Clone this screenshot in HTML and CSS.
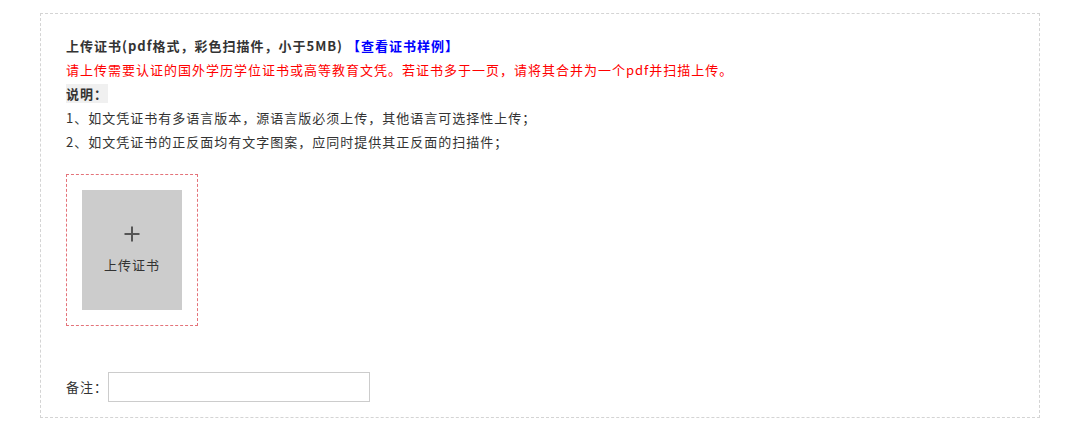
FILE: index.html
```html
<!DOCTYPE html>
<html lang="zh-CN">
<head>
<meta charset="utf-8">
<title>上传证书</title>
<link rel="stylesheet" href="styles.css">
</head>
<body>
<div class="panel">
  <div class="intro">
    <p class="title">上传证书(pdf格式，彩色扫描件，小于5MB) <a class="sample" href="#">【查看证书样例】</a></p>
    <p class="warn">请上传需要认证的国外学历学位证书或高等教育文凭。若证书多于一页，请将其合并为一个pdf并扫描上传。</p>
    <p><span class="label">说明：</span></p>
    <p>1、如文凭证书有多语言版本，源语言版必须上传，其他语言可选择性上传；</p>
    <p>2、如文凭证书的正反面均有文字图案，应同时提供其正反面的扫描件；</p>
  </div>
  <div class="upload">
    <div class="upload-btn">
      <svg class="plus" width="16" height="16" viewBox="0 0 16 16"><path d="M8 0.5v15M0.5 8h15" stroke="#555" stroke-width="2" fill="none"/></svg>
      <span class="upload-text">上传证书</span>
    </div>
  </div>
  <div class="remark">
    <span class="remark-label">备注：</span>
    <input class="remark-input" type="text">
  </div>
</div>
</body>
</html>
```
FILE: styles.css
```css
html, body {
  margin: 0;
  padding: 0;
  background: #fff;
}
body {
  padding: 13px 0 0 40px;
  font-family: "Microsoft YaHei", "Noto Sans CJK SC", "Noto Sans", sans-serif;
  font-size: 13px;
  letter-spacing: 1px;
  color: #333;
}
.panel {
  border: 1px dashed #d4d4d4;
  padding: 20px 25px 15px;
  box-sizing: border-box;
  width: 1000px;
}
.intro p {
  margin: 0;
  line-height: 24px;
}
.title {
  font-weight: bold;
}
.sample {
  color: #0000ff;
  text-decoration: none;
  font-weight: bold;
}
.warn {
  color: #ff0000;
}
.label {
  font-weight: bold;
  background: #f0f0f0;
}
.upload {
  margin-top: 20px;
  width: 132px;
  box-sizing: border-box;
  border: 1px dashed #e4737a;
  padding: 15px;
}
.upload-btn {
  width: 100px;
  height: 120px;
  background: #cccccc;
  display: flex;
  flex-direction: column;
  align-items: center;
  padding-top: 36px;
  box-sizing: border-box;
}
.plus {
  display: block;
}
.upload-text {
  margin-top: 14px;
  line-height: 18px;
  color: #333;
}
.remark {
  margin-top: 46px;
  display: flex;
  align-items: center;
}
.remark-label {
  line-height: 30px;
}
.remark-input {
  width: 262px;
  height: 30px;
  box-sizing: border-box;
  border: 1px solid #ccc;
  margin: 0;
  padding: 0 6px;
  outline: none;
}
```
